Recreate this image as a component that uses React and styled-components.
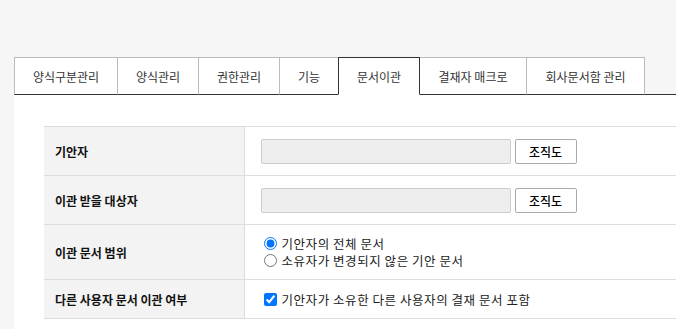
import React from "react"
import styled, { createGlobalStyle } from "styled-components"

const GlobalStyle = createGlobalStyle`
  html, body {
    margin: 0;
    padding: 0;
    background: #f6f6f6;
    font-family: "Noto Sans CJK KR", "Noto Sans", sans-serif;
    font-size: 12px;
    color: #222;
    overflow: hidden;
  }
`

const Page = styled.div`
  display: flex;
  flex-direction: column;
  padding-top: 57px;
  height: 329px;
  box-sizing: border-box;
`

const TabBar = styled.ul`
  display: flex;
  flex-shrink: 0;
  margin: 0 0 0 14px;
  padding: 0;
  list-style: none;
  border-bottom: 1px solid #333;
  height: 37px;
`

const Tab = styled.li`
  display: flex;
  align-items: center;
  justify-content: center;
  box-sizing: border-box;
  height: 38px;
  margin-right: -1px;
  background: #fff;
  border: 1px solid ${(p) => (p.$active ? "#333" : "#bbb")};
  border-bottom: 1px solid ${(p) => (p.$active ? "#fff" : "#333")};
  color: #333;
  white-space: nowrap;
  position: relative;
  z-index: ${(p) => (p.$active ? 2 : 1)};
  width: ${(p) => p.$w}px;
`

const Panel = styled.div`
  flex: 1;
  min-height: 0;
  margin-left: 14px;
  background: #fff;
  padding: 31px 0 0 30px;
`

const Table = styled.table`
  width: 100%;
  border-collapse: collapse;
  border-top: 1px solid #ddd;
`

const Row = styled.tr`
  height: ${(p) => p.$h}px;
  border-bottom: 1px solid #ddd;
`

const Head = styled.th`
  width: 200px;
  box-sizing: border-box;
  background: #f3f3f3;
  border-right: 1px solid #ddd;
  text-align: left;
  padding: 0 0 0 11px;
  font-weight: 700;
  font-size: 12px;
  color: #111;
`

const Cell = styled.td`
  padding: 0 0 0 16px;
  vertical-align: middle;
`

const Field = styled.div`
  display: flex;
  gap: 4px;
  align-items: center;
`

const Input = styled.input`
  box-sizing: border-box;
  width: 250px;
  height: 25px;
  background: #eee;
  border: 1px solid #ccc;
  border-radius: 2px;
  margin: 0;
`

const Button = styled.button`
  box-sizing: border-box;
  width: 62px;
  height: 25px;
  background: #fff;
  border: 1px solid #aaa;
  border-radius: 2px;
  font-family: inherit;
  font-size: 12px;
  font-weight: 500;
  color: #000;
  padding: 0;
  cursor: pointer;
`

const OptionList = styled.div`
  display: flex;
  flex-direction: column;
`

const Option = styled.label`
  display: flex;
  align-items: center;
  height: 17px;
  font-size: 12.5px;
  line-height: 17px;
  letter-spacing: 0.55px;
  color: #222;

  input {
    margin: 0 5px 0 3px;
    width: 13px;
    height: 13px;
  }
`

const tabs = [
  { label: "양식구분관리", w: 104 },
  { label: "양식관리", w: 82 },
  { label: "권한관리", w: 82 },
  { label: "기능", w: 60 },
  { label: "문서이관", w: 82, active: true },
  { label: "결재자 매크로", w: 108 },
  { label: "회사문서함 관리", w: 119 },
]

function PickerRow({ label }) {
  return (
    <Row $h={49}>
      <Head>{label}</Head>
      <Cell>
        <Field>
          <Input readOnly />
          <Button>조직도</Button>
        </Field>
      </Cell>
    </Row>
  )
}

export default function App() {
  return (
    <Page>
      <GlobalStyle />
      <TabBar>
        {tabs.map((t) => (
          <Tab key={t.label} $w={t.w} $active={t.active}>
            {t.label}
          </Tab>
        ))}
      </TabBar>
      <Panel>
        <Table>
          <tbody>
            <PickerRow label="기안자" />
            <PickerRow label="이관 받을 대상자" />
            <Row $h={55}>
              <Head>이관 문서 범위</Head>
              <Cell>
                <OptionList>
                  <Option>
                    <input type="radio" name="scope" defaultChecked />
                    기안자의 전체 문서
                  </Option>
                  <Option>
                    <input type="radio" name="scope" />
                    소유자가 변경되지 않은 기안 문서
                  </Option>
                </OptionList>
              </Cell>
            </Row>
            <Row $h={39}>
              <Head>다른 사용자 문서 이관 여부</Head>
              <Cell>
                <Option>
                  <input type="checkbox" defaultChecked />
                  기안자가 소유한 다른 사용자의 결재 문서 포함
                </Option>
              </Cell>
            </Row>
          </tbody>
        </Table>
      </Panel>
    </Page>
  )
}
